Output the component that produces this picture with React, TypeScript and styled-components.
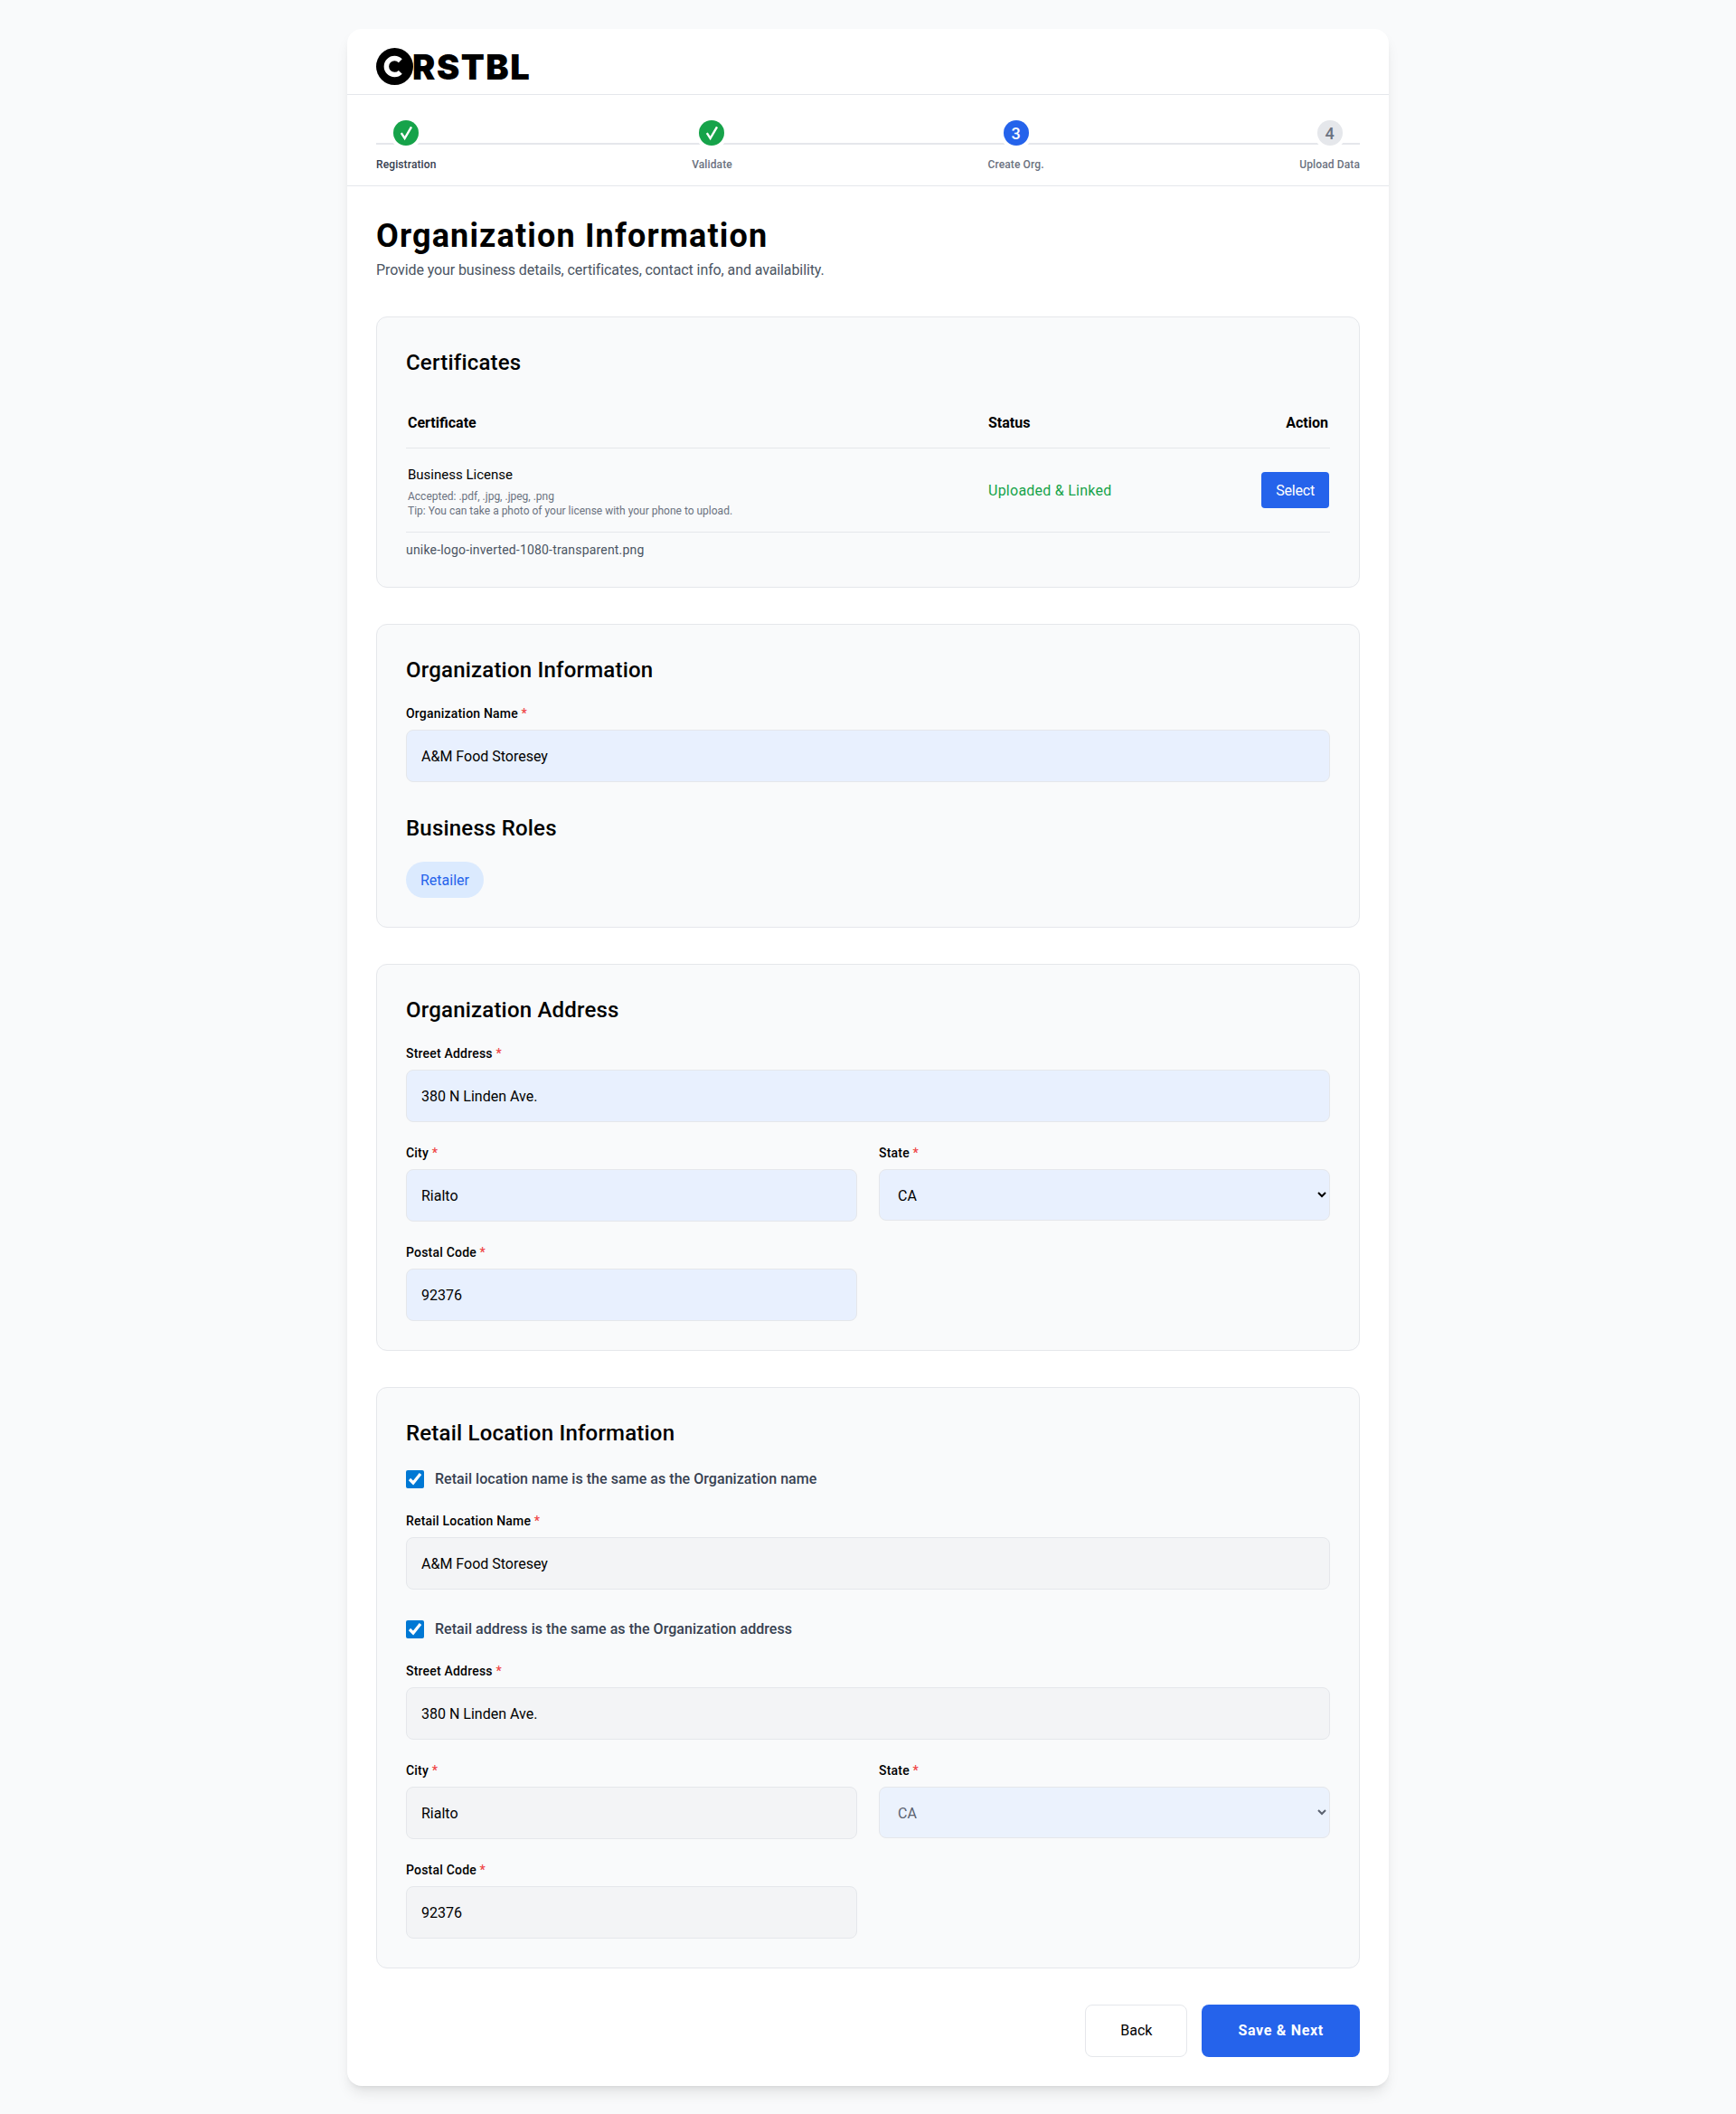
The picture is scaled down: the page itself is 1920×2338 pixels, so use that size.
import React from "react";
import styled, { createGlobalStyle } from "styled-components";

const Global = createGlobalStyle`
  * { box-sizing: border-box; }
  body { margin: 0; background: #f9fafb; font-family: Roboto, "Noto Sans", Arial, sans-serif; color: #000; }
`;
const Page = styled.div`
  padding: 32px 16px;
  display: flex;
  justify-content: center;
`;
const Card = styled.main`
  width: 1152px;
  background: #fff;
  border-radius: 16px;
  box-shadow: 0 10px 15px -3px rgba(0,0,0,.1), 0 4px 6px -4px rgba(0,0,0,.1);
`;
const Header = styled.header`
  height: 73px;
  padding: 19px 32px 0;
  border-bottom: 1px solid #e5e7eb;
  display: flex;
  align-items: flex-start;
`;
const Logo = styled.div`
  display: flex;
  align-items: center;
`;
const LogoText = styled.span`
  font-family: Inter, sans-serif;
  font-weight: 900;
  font-size: 38px;
  line-height: 41px;
  letter-spacing: 1.5px;
  margin: 3px 0 0 -1px;
`;
const Stepper = styled.nav`
  position: relative;
  height: 101px;
  padding: 28px 32px 0;
  border-bottom: 1px solid #e5e7eb;
  display: flex;
  justify-content: space-between;
`;
const StepLine = styled.div`
  position: absolute;
  left: 32px;
  right: 32px;
  top: 53px;
  height: 2px;
  background: #e5e7eb;
`;
const Step = styled.div`
  position: relative;
  display: flex;
  flex-direction: column;
  align-items: center;
`;
const Dot = styled.div<{ $bg: string; $fg: string }>`
  width: 28px;
  height: 28px;
  border-radius: 50%;
  background: ${p => p.$bg};
  color: ${p => p.$fg};
  box-shadow: 0 0 0 4px #fff;
  display: flex;
  align-items: center;
  justify-content: center;
  font-size: 18px;
  font-weight: 500;
`;
const StepLabel = styled.span<{ $dark?: boolean }>`
  margin-top: 13px;
  font-size: 12px;
  line-height: 16px;
  font-weight: 500;
  letter-spacing: 0.12px;
  color: ${p => (p.$dark ? "#374151" : "#6b7280")};
`;
const Body = styled.div`
  padding: 32px;
`;
const Title = styled.h1`
  margin: 0;
  font-size: 36px;
  line-height: 46px;
  font-weight: 700;
  letter-spacing: 1.15px;
`;
const Subtitle = styled.p`
  margin: 2px 0 40px;
  height: 24px;
  font-size: 16px;
  line-height: 26px;
  letter-spacing: -0.1px;
  color: #4b5563;
`;
const Section = styled.section`
  background: #f9fafb;
  border: 1px solid #e5e7eb;
  border-radius: 12px;
  padding: 32px;
  margin-bottom: 40px;
`;
const SectionTitle = styled.h2<{ $mt?: number; $mb?: number }>`
  margin: ${p => p.$mt ?? 0}px 0 ${p => p.$mb ?? 24}px;
  height: 32px;
  font-size: 24px;
  line-height: 36px;
  font-weight: 500;
  letter-spacing: 0.2px;
`;
const CertTable = styled.table`
  width: 100%;
  border-collapse: collapse;
`;
const Th = styled.th<{ $right?: boolean; $w?: string }>`
  width: ${p => p.$w ?? "auto"};
  padding: 1px 2px 0;
  height: 56px;
  font-size: 16px;
  font-weight: 700;
  text-align: ${p => (p.$right ? "right" : "left")};
  border-bottom: 1px solid #e5e7eb;
`;
const Td = styled.td<{ $right?: boolean }>`
  padding: 16px 2px 15px;
  text-align: ${p => (p.$right ? "right" : "left")};
  border-bottom: 1px solid #e5e7eb;
  vertical-align: middle;
`;
const CertName = styled.div`
  font-size: 15px;
  line-height: 24px;
  padding-top: 1px;
  margin-bottom: 4px;
`;
const CertHint = styled.div`
  font-size: 12px;
  line-height: 16px;
  color: #6b7280;
`;
const Status = styled.span`
  font-size: 16px;
  letter-spacing: 0.25px;
  color: #16a34a;
`;
const SelectButton = styled.button`
  height: 40px;
  padding: 0 16px;
  margin-right: -1px;
  border: 0;
  border-radius: 4px;
  background: #2563eb;
  color: #fff;
  font: inherit;
  font-size: 16px;
  letter-spacing: -0.2px;
`;
const FileName = styled.div`
  margin: 9px 0 -1px;
  font-size: 14px;
  line-height: 20px;
  letter-spacing: 0.18px;
  color: #4b5563;
`;
const Field = styled.div`
  margin-bottom: 24px;
  &:last-child { margin-bottom: 0; }
`;
const Row = styled.div`
  display: grid;
  grid-template-columns: 1fr 1fr;
  gap: 24px;
  margin-bottom: 24px;
  &:last-child { margin-bottom: 0; }
  ${Field} { margin-bottom: 0; }
`;
const Label = styled.label`
  display: block;
  margin-bottom: 8px;
  font-size: 14px;
  line-height: 20px;
  font-weight: 500;
  letter-spacing: 0.2px;
`;
const Req = styled.span`
  color: #ef4444;
`;
const Input = styled.input<{ $muted?: boolean }>`
  display: block;
  width: 100%;
  height: 58px;
  padding: 2px 16px 0;
  border: 1px solid #e5e7eb;
  border-radius: 8px;
  background: ${p => (p.$muted ? "#f3f4f6" : "#e8f0fe")};
  color: #000;
  font: inherit;
  font-size: 16px;
  outline: none;
`;
const Select = styled.select<{ $muted?: boolean }>`
  display: block;
  width: 100%;
  height: 57px;
  padding: 2px 16px 0;
  border: 1px solid #e5e7eb;
  border-radius: 8px;
  background: ${p => (p.$muted ? "#ebf2fd" : "#e8f0fe")};
  color: ${p => (p.$muted ? "#5b6270" : "#000")};
  font: inherit;
  font-size: 16px;
`;
const Pill = styled.span`
  display: inline-flex;
  align-items: center;
  vertical-align: top;
  height: 40px;
  padding: 1px 16px 0;
  border-radius: 999px;
  background: #dbeafe;
  color: #2563eb;
  font-size: 16px;
`;
const CheckRow = styled.label<{ $mt?: number }>`
  display: flex;
  align-items: center;
  gap: 12px;
  margin: ${p => p.$mt ?? 0}px 0 24px;
  height: 24px;
  font-size: 16px;
  font-weight: 500;
  letter-spacing: 0.05px;
  color: #374151;
`;
const Check = styled.input`
  width: 20px;
  height: 20px;
  margin: 0;
  accent-color: #0078d4;
`;
const Actions = styled.div`
  display: flex;
  justify-content: flex-end;
  gap: 16px;
  margin-top: 40px;
`;
const BackButton = styled.button`
  height: 58px;
  padding: 0 38px;
  border-radius: 8px;
  border: 1px solid #e5e7eb;
  background: #fff;
  color: #000;
  font: inherit;
  font-size: 16px;
`;
const NextButton = styled.button`
  height: 58px;
  padding: 0 40px;
  border-radius: 8px;
  border: 0;
  background: #2563eb;
  color: #fff;
  font: inherit;
  font-size: 16px;
  font-weight: 700;
  letter-spacing: 0.7px;
`;

const CheckMark = () => (
  <svg width="28" height="28" viewBox="0 0 28 28" fill="none" aria-hidden="true">
    <path d="M8.8 14.2 L12.6 20 L20 7.4" stroke="#fff" strokeWidth="2.4" />
  </svg>
);

const TextField = ({ label, value, muted }: { label: string; value: string; muted?: boolean }) => (
  <Field>
    <Label>{label} <Req>*</Req></Label>
    <Input readOnly value={value} $muted={muted} />
  </Field>
);

const StateField = ({ muted }: { muted?: boolean }) => (
  <Field>
    <Label>State <Req>*</Req></Label>
    <Select $muted={muted} defaultValue="CA">
      <option value="CA">CA</option>
    </Select>
  </Field>
);

const AddressFields = ({ muted }: { muted?: boolean }) => (
  <>
    <TextField label="Street Address" value="380 N Linden Ave." muted={muted} />
    <Row>
      <TextField label="City" value="Rialto" muted={muted} />
      <StateField muted={muted} />
    </Row>
    <Row>
      <TextField label="Postal Code" value="92376" muted={muted} />
    </Row>
  </>
);

export default function App() {
  return (
    <Page>
      <Global />
      <Card>
        <Header>
          <Logo>
            <svg width="41" height="41" viewBox="0 0 41 41" aria-hidden="true">
              <circle cx="20.5" cy="20.5" r="20.5" fill="#000" />
              <path d="M26.8 14.2 A9 9 0 1 0 26.8 26.8" fill="none" stroke="#fff" strokeWidth="5.5" />
            </svg>
            <LogoText>RSTBL</LogoText>
          </Logo>
        </Header>
        <Stepper>
          <StepLine />
          <Step><Dot $bg="#16a34a" $fg="#fff"><CheckMark /></Dot><StepLabel $dark>Registration</StepLabel></Step>
          <Step><Dot $bg="#16a34a" $fg="#fff"><CheckMark /></Dot><StepLabel>Validate</StepLabel></Step>
          <Step><Dot $bg="#2563eb" $fg="#fff">3</Dot><StepLabel>Create Org.</StepLabel></Step>
          <Step><Dot $bg="#e5e7eb" $fg="#6b7280">4</Dot><StepLabel>Upload Data</StepLabel></Step>
        </Stepper>
        <Body>
          <Title>Organization Information</Title>
          <Subtitle>Provide your business details, certificates, contact info, and availability.</Subtitle>

          <Section>
            <SectionTitle>Certificates</SectionTitle>
            <CertTable>
              <thead>
                <tr>
                  <Th>Certificate</Th>
                  <Th $w="240px">Status</Th>
                  <Th $right $w="140px">Action</Th>
                </tr>
              </thead>
              <tbody>
                <tr>
                  <Td>
                    <CertName>Business License</CertName>
                    <CertHint>Accepted: .pdf, .jpg, .jpeg, .png</CertHint>
                    <CertHint>Tip: You can take a photo of your license with your phone to upload.</CertHint>
                  </Td>
                  <Td><Status>Uploaded &amp; Linked</Status></Td>
                  <Td $right><SelectButton>Select</SelectButton></Td>
                </tr>
              </tbody>
            </CertTable>
            <FileName>unike-logo-inverted-1080-transparent.png</FileName>
          </Section>

          <Section>
            <SectionTitle>Organization Information</SectionTitle>
            <TextField label="Organization Name" value="A&M Food Storesey" />
            <SectionTitle $mt={33} $mb={23}>Business Roles</SectionTitle>
            <Pill>Retailer</Pill>
          </Section>

          <Section>
            <SectionTitle>Organization Address</SectionTitle>
            <AddressFields />
          </Section>

          <Section>
            <SectionTitle $mb={25}>Retail Location Information</SectionTitle>
            <CheckRow><Check type="checkbox" defaultChecked />Retail location name is the same as the Organization name</CheckRow>
            <TextField label="Retail Location Name" value="A&M Food Storesey" muted />
            <CheckRow $mt={32}><Check type="checkbox" defaultChecked />Retail address is the same as the Organization address</CheckRow>
            <AddressFields muted />
          </Section>

          <Actions>
            <BackButton>Back</BackButton>
            <NextButton>Save &amp; Next</NextButton>
          </Actions>
        </Body>
      </Card>
    </Page>
  );
}
